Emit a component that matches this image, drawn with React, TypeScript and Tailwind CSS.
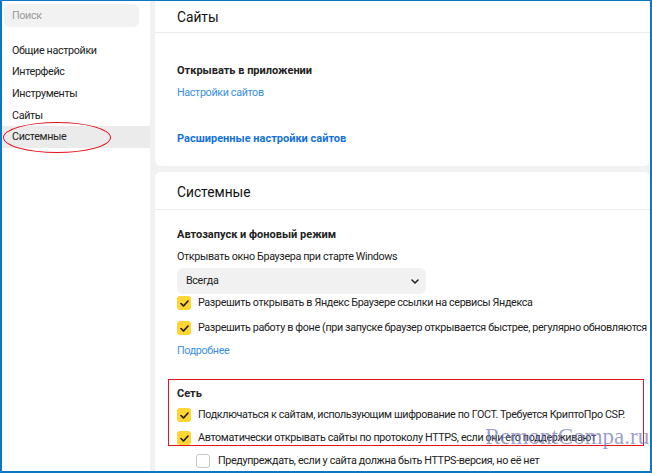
import React from "react";

const menu = ["Общие настройки", "Интерфейс", "Инструменты", "Сайты", "Системные"];

function Check({ on = true }: { on?: boolean }) {
  if (!on) {
    return <span className="w-[14px] h-[14px] shrink-0 rounded-[3px] border border-[#c8c8c8] bg-white" />;
  }
  return (
    <span className="w-[14px] h-[14px] shrink-0 rounded-[3px] bg-[#ffd533] flex items-center justify-center">
      <svg width="9" height="7" viewBox="0 0 9 7" fill="none">
        <path d="M1 3.5 L3.5 6 L8 1" stroke="#1a1a1a" strokeWidth="1.6" strokeLinecap="round" strokeLinejoin="round" />
      </svg>
    </span>
  );
}

function Row({ text, on = true, indent = false }: { text: string; on?: boolean; indent?: boolean }) {
  return (
    <div className={`flex items-center h-[14px] whitespace-nowrap ${indent ? "pl-[19px] gap-[8px]" : "gap-[7px]"}`}>
      <Check on={on} />
      <span className="text-[#222]">{text}</span>
    </div>
  );
}

export default function App() {
  return (
    <div
      className="relative w-[652px] h-[473px] overflow-hidden border-l-2 border-r-2 border-b-2 border-t border-[#0b78c6] flex bg-[#f1f1f1] text-[10.75px] tracking-[-0.35px] leading-[16px] text-[#222]"
      style={{ fontFamily: 'Roboto, "Liberation Sans", Arial, sans-serif' }}
    >
      {/* sidebar */}
      <div className="w-[148px] shrink-0 bg-white pt-[3px]">
        <div className="ml-[2px] w-[135px] h-[23px] rounded-[6px] bg-[#f2f2f2] flex items-center pl-[8px] text-[#9a9a9a]">
          Поиск
        </div>
        <div className="mt-[13px]">
          {menu.map((m) => (
            <div
              key={m}
              className={`h-[21.6px] flex items-center pl-[10px] ${m === "Системные" ? "bg-[#ebebeb]" : ""}`}
            >
              {m}
            </div>
          ))}
        </div>
      </div>

      {/* content */}
      <div className="flex-1 ml-[5px] flex flex-col gap-[6px] min-w-0">
        <div className="bg-white rounded-b-[6px] h-[165px]">
          <div className="h-[32px] border-b border-[#ebebeb] flex items-center pl-[22px] text-[13.75px] tracking-normal text-[#111]">
            Сайты
          </div>
          <div className="pl-[22px] pt-[30px]">
            <div className="font-bold text-[11px] tracking-normal">Открывать в приложении</div>
            <div className="mt-[6px] text-[#3b8fe0]">Настройки сайтов</div>
            <div className="mt-[30px] font-bold text-[11px] tracking-normal text-[#1571d9]">Расширенные настройки сайтов</div>
          </div>
        </div>

        <div className="bg-white rounded-t-[6px] flex-1">
          <div className="h-[38px] border-b border-[#ebebeb] flex items-center pt-[3px] pl-[22px] text-[13.75px] tracking-normal text-[#111]">
            Системные
          </div>
          <div className="pl-[22px] pt-[17px]">
            <div className="font-bold text-[11px] tracking-normal">Автозапуск и фоновый режим</div>
            <div className="mt-[6px]">Открывать окно Браузера при старте Windows</div>
            <div className="mt-[3px] w-[249px] h-[26px] rounded-[6px] bg-[#f1f1f1] flex items-center justify-between pl-[9px] pr-[7px]">
              <span>Всегда</span>
              <svg width="8" height="5" viewBox="0 0 8 5" fill="none">
                <path d="M1 1 L4 4 L7 1" stroke="#222" strokeWidth="1.5" strokeLinecap="round" strokeLinejoin="round" />
              </svg>
            </div>
            <div className="mt-[2px] flex flex-col gap-[11px]">
              <Row text="Разрешить открывать в Яндекс Браузере ссылки на сервисы Яндекса" />
              <Row text="Разрешить работу в фоне (при запуске браузер открывается быстрее, регулярно обновляются" />
            </div>
            <div className="mt-[8px] text-[#3b8fe0]">Подробнее</div>
            <div className="mt-[27px] font-bold text-[11px] tracking-normal">Сеть</div>
            <div className="mt-[6px] flex flex-col gap-[9px]">
              <Row text="Подключаться к сайтам, использующим шифрование по ГОСТ. Требуется КриптоПро CSP." />
              <Row text="Автоматически открывать сайты по протоколу HTTPS, если они его поддерживают" />
              <Row text="Предупреждать, если у сайта должна быть HTTPS-версия, но её нет" on={false} indent />
            </div>
          </div>
        </div>
      </div>

      {/* annotations */}
      <div className="absolute left-[1px] top-[121px] w-[108px] h-[31px] rounded-[50%] border-[1.5px] border-[#e3141b]" />
      <div className="absolute left-[166px] top-[378px] w-[476px] h-[67px] border-[1.5px] border-[#e3141b]" />
      <div
        className="absolute left-[483px] top-[422px] text-[23px] leading-[28px] tracking-normal text-[#6f74b8]/70 whitespace-nowrap"
        style={{ fontFamily: '"Liberation Serif", "Times New Roman", serif' }}
      >
        RemontCompa.ru
      </div>
    </div>
  );
}
